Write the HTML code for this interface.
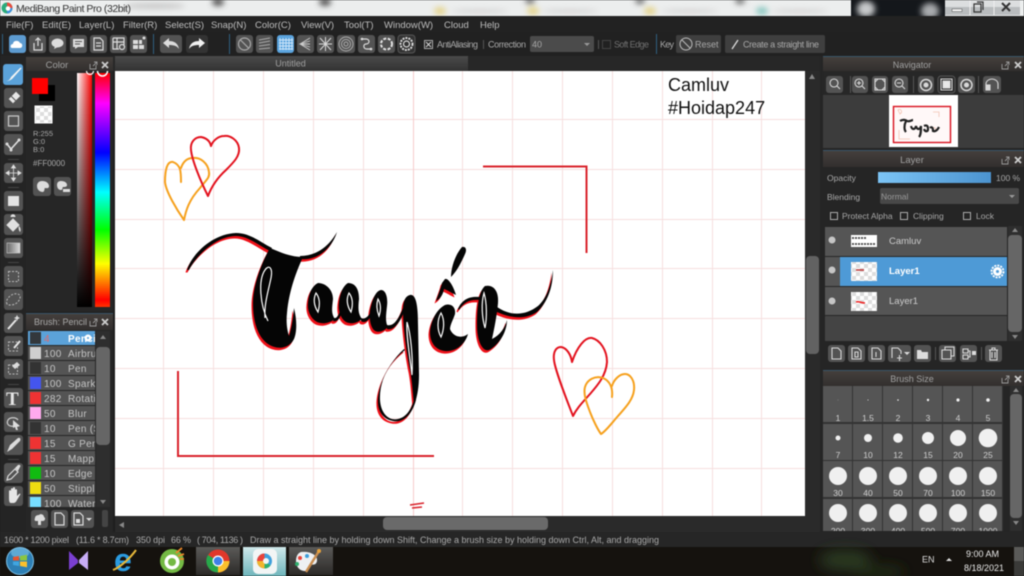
<!DOCTYPE html>
<html><head><meta charset="utf-8"><title>MediBang Paint Pro</title>
<style>
html,body{margin:0;padding:0;width:1024px;height:576px;overflow:hidden;background:#1f1f1f}
svg{display:block;filter:blur(.45px)}
text{font-family:"Liberation Sans",sans-serif;font-size:9.5px;fill:#a8a8a8}
.m text{font-size:9.5px;fill:#bdbdbd}
.h{text-anchor:middle;fill:#a0a0a0;font-size:9px}
.b{fill:#535353}
.i{fill:none;stroke:#dcdcdc;stroke-width:1.2}
.f{fill:#dcdcdc}
.g{stroke:#f6dfdf;stroke-width:1;fill:none}
.r text{font-size:10px;fill:#c4c4c4;letter-spacing:.3px}
.z text{font-size:8.5px;fill:#d0d0d0;text-anchor:middle}
</style></head><body>
<svg width="1024" height="576" viewBox="0 0 1024 576" xmlns="http://www.w3.org/2000/svg">
<defs>
<filter id="bl" x="-50%" y="-50%" width="200%" height="200%"><feGaussianBlur stdDeviation="3"/></filter>
<filter id="bl2" x="-50%" y="-50%" width="200%" height="200%"><feGaussianBlur stdDeviation="7"/></filter>
<linearGradient id="hue" x1="0" y1="0" x2="0" y2="1"><stop offset="0" stop-color="#f00"/><stop offset=".13" stop-color="#f0f"/><stop offset=".34" stop-color="#00f"/><stop offset=".51" stop-color="#0ff"/><stop offset=".67" stop-color="#0f0"/><stop offset=".815" stop-color="#ff0"/><stop offset=".97" stop-color="#f00"/><stop offset="1" stop-color="#f30"/></linearGradient>
<linearGradient id="wr" x1="0" y1="0" x2="1" y2="0"><stop offset="0" stop-color="#fff"/><stop offset="1" stop-color="#f00"/></linearGradient>
<linearGradient id="tb" x1="0" y1="0" x2="0" y2="1"><stop offset="0" stop-color="#000" stop-opacity="0"/><stop offset="1" stop-color="#000"/></linearGradient>
<linearGradient id="op" x1="0" y1="0" x2="1" y2="0"><stop offset="0" stop-color="#7cc4f5"/><stop offset="1" stop-color="#4b93cf"/></linearGradient>
<linearGradient id="hd" x1="0" y1="0" x2="0" y2="1"><stop offset="0" stop-color="#443f3c"/><stop offset="1" stop-color="#322f2e"/></linearGradient>
<linearGradient id="tab" x1="0" y1="0" x2="0" y2="1"><stop offset="0" stop-color="#4a4a4a"/><stop offset="1" stop-color="#333"/></linearGradient>
<linearGradient id="bt" x1="0" y1="0" x2="0" y2="1"><stop offset="0" stop-color="#5b5a58"/><stop offset="1" stop-color="#2c2a28"/></linearGradient>
<linearGradient id="bta" x1="0" y1="0" x2="0" y2="1"><stop offset="0" stop-color="#cfe8ea"/><stop offset="1" stop-color="#6fb5bb"/></linearGradient>
<linearGradient id="gr" x1="0" y1="0" x2="1" y2="0"><stop offset="0" stop-color="#666"/><stop offset="1" stop-color="#ddd"/></linearGradient>
<pattern id="ck" width="8" height="8" patternUnits="userSpaceOnUse"><rect width="8" height="8" fill="#fff"/><rect width="4" height="4" fill="#ddd"/><rect x="4" y="4" width="4" height="4" fill="#ddd"/></pattern>
<clipPath id="cb"><rect x="28" y="331" width="67" height="176"/></clipPath>
<clipPath id="cz"><rect x="823" y="386" width="180" height="145"/></clipPath>
<clipPath id="cc"><rect x="77" y="71" width="36" height="240"/></clipPath>
</defs>

<!-- title bar -->
<rect width="1024" height="16" fill="#eceeee"/>
<g filter="url(#bl)">
<ellipse cx="155" cy="6" rx="30" ry="3" fill="#c9c9c9"/>
<ellipse cx="218" cy="2" rx="6" ry="4" fill="#555"/>
<ellipse cx="325" cy="2" rx="6" ry="4" fill="#555"/>
<ellipse cx="440" cy="11" rx="6" ry="4" fill="#e5d58e"/><ellipse cx="480" cy="11" rx="28" ry="2" fill="#d5d5d5"/>
<ellipse cx="533" cy="11" rx="6" ry="4" fill="#e5d58e"/><ellipse cx="570" cy="11" rx="28" ry="2" fill="#d5d5d5"/>
<ellipse cx="650" cy="11" rx="6" ry="4" fill="#e5d58e"/><ellipse cx="690" cy="11" rx="28" ry="2" fill="#d5d5d5"/>
<ellipse cx="762" cy="11" rx="6" ry="4" fill="#8cc9c2"/><ellipse cx="800" cy="11" rx="28" ry="2" fill="#d5d5d5"/>
<ellipse cx="740" cy="1" rx="5" ry="3" fill="#666"/><ellipse cx="640" cy="1" rx="5" ry="3" fill="#666"/><ellipse cx="530" cy="1" rx="5" ry="3" fill="#666"/>
</g>
<path d="M851,0H945V16H851Z" fill="#14171b"/>
<ellipse cx="866" cy="9" rx="9" ry="8" fill="#c7c9cb" filter="url(#bl)"/>
<ellipse cx="930" cy="11" rx="9" ry="8" fill="#a9abae" filter="url(#bl)"/>
<rect x="945" y="0" width="75" height="15" fill="#b9bcbe"/><rect x="945" y="0" width="75" height="7" fill="#dcdedf"/>
<path d="M970,0V15M994,0V15" stroke="#eee"/>
<rect x="952" y="9" width="10" height="2.5" fill="#fff" stroke="#444" stroke-width=".5"/>
<path d="M974,4h7v8h-7zM977,2h6v8" fill="none" stroke="#333" stroke-width="1.2"/>
<path d="M1002,3l8,8M1010,3l-8,8" stroke="#333" stroke-width="2"/>
<circle cx="7" cy="8" r="5.5" fill="#2bab7c"/><path d="M7,2.5a5.5,5.5,0,0,1,5.5,5.5H7Z" fill="#e84a3c"/><path d="M7,8h5.5A5.5,5.5,0,0,1,7,13.500Z" fill="#3f8fdb"/><circle cx="8" cy="8.500" r="2.300" fill="#fff"/>
<text x="16" y="12" style="font-size:10.500px;fill:#333" textLength="115">MediBang Paint Pro (32bit)</text>

<!-- menu -->
<rect y="16" width="1024" height="16" fill="#222"/>
<g class="m">
<text x="6" y="28">File(F)</text><text x="42" y="28">Edit(E)</text><text x="79" y="28">Layer(L)</text><text x="123" y="28">Filter(R)</text><text x="165" y="28">Select(S)</text><text x="211" y="28">Snap(N)</text><text x="255" y="28">Color(C)</text><text x="301" y="28">View(V)</text><text x="344" y="28">Tool(T)</text><text x="384" y="28">Window(W)</text><text x="444" y="28">Cloud</text><text x="480" y="28">Help</text>
</g>

<!-- toolbar -->
<rect y="32" width="1024" height="24" fill="#212121"/>
<path d="M2.500,34V54M153.500,34V54M229.500,34V54M656.500,34V54" stroke="#2f5f80" stroke-width="1"/>
<rect x="9" y="35" width="17" height="18" rx="3" fill="#5d9bd0"/>
<path d="M12,48c-2,0-2-4,1-4c0-4,6-4,7-1c3,0,3,5,0,5Z" fill="#fff"/>
<g class="b"><rect x="29" y="35" width="17" height="18" rx="3"/><rect x="49" y="35" width="17" height="18" rx="3"/><rect x="70" y="35" width="17" height="18" rx="3"/><rect x="90" y="35" width="17" height="18" rx="3"/><rect x="110" y="35" width="17" height="18" rx="3"/><rect x="130" y="35" width="17" height="18" rx="3"/><rect x="160" y="35" width="22" height="18" rx="3"/><rect x="186" y="35" width="22" height="18" rx="3" style="fill:#333"/></g>
<path d="M34,43v7h8v-7M38,46V38M35.500,40.500L38,38l2.500,2.500" class="i"/>
<ellipse cx="57.500" cy="43" rx="6" ry="4.500" class="f"/><path d="M55,46l-1,3l4-2Z" class="f"/>
<path d="M73,39h11v8h-6l-3,2v-2h-2Z" class="f"/><path d="M75,41.500h7M75,44h5" stroke="#555"/>
<path d="M94,38h6l3,3v9h-9Z M96,43h5M96,46h5" class="i"/>
<path d="M113,38h11v7M113,38v11h6M113,42h11M117,38v11" class="i"/><circle cx="122" cy="47" r="2.500" class="i"/>
<path d="M133,40h5v4h-5zM139,40h3v4h-3zM133,45h5v4h-5zM139,45h5v4h-5z" class="f"/><circle cx="144" cy="38" r="1.500" class="f"/>
<path d="M163,43l6-5v3c5,0,9,2,10,8c-2-3-5-4-10-4v3Z" class="f"/>
<path d="M205,43l-6-5v3c-5,0-9,2-10,8c2-3,5-4,10-4v3Z" fill="#f0f0f0"/>
<g class="b"><rect x="236" y="35" width="17" height="18" rx="3"/><rect x="256" y="35" width="17" height="18" rx="3"/><rect x="297" y="35" width="17" height="18" rx="3"/><rect x="317" y="35" width="17" height="18" rx="3"/><rect x="337" y="35" width="18" height="18" rx="3"/><rect x="358" y="35" width="17" height="18" rx="3"/><rect x="378" y="35" width="17" height="18" rx="3"/><rect x="398" y="35" width="17" height="18" rx="3" style="fill:#333" stroke="#555"/></g>
<rect x="277" y="35" width="17" height="18" rx="3" fill="#5ba4de"/>
<circle cx="244.500" cy="44" r="6" fill="none" stroke="#aaa" stroke-width="1.200"/><path d="M240.500,40l8,8" stroke="#aaa" stroke-width="1.200"/>
<path d="M259,40l11-2M259,43l11-2M259,46l11-1.500M259,49l11-1" stroke="#aaa" stroke-width="1"/>
<path d="M280,38v12M283,38v12M286,38v12M289,38v12M292,38v12M279,40h14M279,43h14M279,46h14M279,49h14" stroke="#cfe6fa" stroke-width=".9"/>
<path d="M310,38l-10,6l10,6M310,44h-10M310,41l-10,3l10,3" stroke="#ccc" stroke-width=".9" fill="none"/>
<path d="M320,38l11,12M331,38l-11,12M325.500,37v14M319,44h13" stroke="#d8d8d8" stroke-width="1"/>
<circle cx="346" cy="44" r="7" fill="none" stroke="#aaa"/><circle cx="346" cy="44" r="4.500" fill="none" stroke="#aaa"/><circle cx="346" cy="44" r="2" fill="none" stroke="#aaa"/>
<path d="M362,39h4c4,0,4,5,0,5c-3,0-3,5,1,5h4" class="i"/><circle cx="362" cy="39" r="1.300" class="f"/><circle cx="371" cy="49" r="1.300" class="f"/>
<circle cx="386.500" cy="44" r="5.500" fill="none" stroke="#e2e2e2" stroke-width="2" stroke-dasharray="3 1.500"/>
<circle cx="406.500" cy="44" r="3" class="i"/><circle cx="406.500" cy="44" r="6" fill="none" stroke="#d8d8d8" stroke-width="2" stroke-dasharray="2 1"/>

<rect x="424.500" y="40.500" width="8" height="8" fill="none" stroke="#aaa"/><path d="M426,42l5,5M431,42l-5,5" stroke="#ccc" stroke-width="1.200"/>
<text x="437" y="47.500" style="font-size:9px" textLength="41">AntiAliasing</text>
<path d="M483.500,40V49M598.500,40V49" stroke="#555"/>
<text x="488" y="47.500" style="font-size:9px" textLength="38">Correction</text>
<rect x="530" y="36" width="64" height="16" rx="2" fill="#4b4b4b"/><text x="532" y="47.500" style="font-size:9px">40</text><path d="M584,43h6l-3,3Z" fill="#999"/>
<rect x="602.500" y="40.500" width="8" height="8" fill="none" stroke="#444"/>
<text x="614" y="47.500" style="font-size:9px;fill:#707070" textLength="35">Soft Edge</text>
<text x="660" y="47.500" style="font-size:9px" textLength="14">Key</text>
<rect x="676" y="35" width="45" height="18" rx="2" fill="#3f3f3f"/><circle cx="686" cy="44" r="6" fill="none" stroke="#bbb"/><path d="M682,40l8,8" stroke="#bbb"/><text x="695" y="47.500" style="font-size:9px">Reset</text>
<rect x="725" y="35" width="100" height="18" rx="2" fill="#3f3f3f"/><path d="M732,49l6-9" stroke="#ddd" stroke-width="1.300"/><text x="743" y="47.500" style="font-size:9px" textLength="76">Create a straight line</text>

<!-- canvas -->
<rect x="113" y="56" width="710" height="15" fill="#272727"/>
<rect x="115" y="56" width="353" height="15" fill="url(#tab)"/>
<text x="290.500" y="66.500" class="h">Untitled</text>
<rect x="115" y="71" width="690" height="445" fill="#fff"/>
<g class="g">
<path d="M163.500,71V516M213.500,71V516M263.500,71V516M313.500,71V516M363.500,71V516M462.500,71V516M512.500,71V516M562.500,71V516M612.500,71V516M662.500,71V516M712.500,71V516M761.500,71V516"/>
<path d="M115,119.500H805M115,169.500H805M115,219.500H805M115,268.500H805M115,318.500H805M115,368.500H805M115,418.500H805M115,468.500H805"/>
</g>
<path d="M413.500,71V516" stroke="#f6cccc"/>

<!-- frames -->
<g fill="none" stroke="#d9232b" stroke-width="2">
<path d="M483,166.500H586.500V253"/>
<path d="M178,371V456H434"/>
<path d="M410,505l14-2M412,508l10-1" stroke-width="1.500"/>
</g>
<!-- hearts -->
<g fill="none" stroke-linecap="round" stroke-linejoin="round" stroke-width="2">
<path stroke="#f6a11e" d="M181,182C181,172 181,165 173,162C167,161 165,170 165,182C166,192 177,210 184,220C186,210 189,200 200,188C206,180 210,178 209,172C208,163 200,157 193,158C187,158 183,162 181,168"/>
<path stroke="#e3131f" d="M211,146C210,141 206,138 201,137C195,137 190,142 191,150C192,160 200,180 208,196C211,188 216,179 226,170C234,162 240,156 239,148C238,140 230,135 224,136C219,136 213,140 211,146"/>
<path stroke="#e3131f" d="M572,362C571,355 567,348 561,347C556,347 553,352 554,360C555,370 566,398 573,416C577,408 582,403 590,394C597,386 606,376 607,362C607,350 600,340 592,338C585,337 577,347 572,362"/>
<path stroke="#f6a11e" d="M612,397C613,388 610,381 603,378C595,375 587,380 585,387C583,394 587,404 590,412C593,420 598,430 601,434C606,431 611,424 618,416C625,408 633,400 634,390C635,380 630,374 625,374C620,374 614,379 612,386"/>
</g>

<!-- lettering, red layer -->
<g transform="translate(-1.500,2.500)" fill="#ee1119" stroke="none">
<path d="M187,270C192,254 212,234 236,233C250,233 260,242 272,248L270,251C258,245 248,236 236,236C216,236 196,256 189,270Z"/>
<path d="M270,248C280,252 290,257 303,257C297,270 289,290 287,313C286,322 287,330 289,336C291,330 293,320 294,308C297,320 297,332 294,339C289,349 277,350 268,344C258,337 253,322 253,303C253,285 262,262 270,248Z"/>
<path d="M300,256C315,256 328,248 337,232C332,248 318,261 300,259Z"/>
<path d="M318,283C326,283 333,290 333,299C332,308 331,314 335,319C328,324 322,324 317,322C310,318 307,310 308,302C309,293 312,286 318,283Z"/>
<path d="M348,283C356,283 359,290 359,299C358,308 358,314 362,319C356,324 350,324 346,322C340,318 338,310 339,302C340,293 343,286 348,283Z"/>
<path d="M381,290C386,290 388,298 387,306C386,315 385,322 388,327C382,333 376,333 373,329C369,323 369,313 371,306C373,298 376,291 381,290Z"/>
<path d="M334,318C338,319 340,312 342,303L343,305C342,314 339,323 333,321ZM361,318C365,320 369,316 372,310L372,313C370,320 365,324 361,321ZM387,325C394,327 399,318 403,308L404,312C400,322 394,331 387,329Z"/>
<path d="M410,295C416,294 418,305 418,325L419,375C419,388 417,398 414,405C413,395 412,380 410,370C406,350 403,325 403,310C403,300 406,296 410,295Z"/>
<path d="M405,350C390,362 379,380 380,400C381,415 390,421 398,419C408,417 415,405 417,385L416,400C412,415 403,423 393,421C382,419 377,410 378,398C380,378 392,360 404,349Z"/>
<path d="M445,305C452,303 456,308 455,314C453,320 450,325 450,329C452,335 460,340 468,334C465,345 455,352 445,351C435,350 430,342 430,332C431,320 437,309 445,305Z"/>
<path d="M445,279C449,278 454,288 456,295C450,292 447,290 444,289C443,295 440,299 436,301C438,295 441,288 442,283Z"/>
<path d="M485,286C494,284 499,292 498,303C497,315 494,330 492,339C500,335 505,328 507,320C507,332 499,345 489,350C482,352 477,340 477,325C477,310 478,292 485,286Z"/>
<path d="M458,309C462,299 470,296 480,297L480,300C470,299 464,302 459,310Z"/>
<path d="M497,307C510,316 525,316 538,306C547,298 551,285 553,270C553,288 547,303 537,312C525,320 510,318 497,312Z"/>
</g>
<!-- lettering, black layer -->
<g fill="#050505" stroke="none">
<path d="M187,270C192,254 212,234 236,233C250,233 260,242 272,248L270,251C258,245 248,236 236,236C216,236 196,256 189,270Z"/>
<path d="M270,248C280,252 290,257 303,257C297,270 289,290 287,313C286,322 287,330 289,336C291,330 293,320 294,308C297,320 297,332 294,339C289,349 277,350 268,344C258,337 253,322 253,303C253,285 262,262 270,248Z"/>
<path d="M300,256C315,256 328,248 337,232C332,248 318,261 300,259Z"/>
<path d="M318,283C326,283 333,290 333,299C332,308 331,314 335,319C328,324 322,324 317,322C310,318 307,310 308,302C309,293 312,286 318,283Z"/>
<path d="M348,283C356,283 359,290 359,299C358,308 358,314 362,319C356,324 350,324 346,322C340,318 338,310 339,302C340,293 343,286 348,283Z"/>
<path d="M381,290C386,290 388,298 387,306C386,315 385,322 388,327C382,333 376,333 373,329C369,323 369,313 371,306C373,298 376,291 381,290Z"/>
<path d="M334,318C338,319 340,312 342,303L343,305C342,314 339,323 333,321ZM361,318C365,320 369,316 372,310L372,313C370,320 365,324 361,321ZM387,325C394,327 399,318 403,308L404,312C400,322 394,331 387,329Z"/>
<path d="M410,295C416,294 418,305 418,325L419,375C419,388 417,398 414,405C413,395 412,380 410,370C406,350 403,325 403,310C403,300 406,296 410,295Z"/>
<path d="M405,350C390,362 379,380 380,400C381,415 390,421 398,419C408,417 415,405 417,385L416,400C412,415 403,423 393,421C382,419 377,410 378,398C380,378 392,360 404,349Z"/>
<path d="M445,305C452,303 456,308 455,314C453,320 450,325 450,329C452,335 460,340 468,334C465,345 455,352 445,351C435,350 430,342 430,332C431,320 437,309 445,305Z"/>
<path d="M445,279C449,278 454,288 456,295C450,292 447,290 444,289C443,295 440,299 436,301C438,295 441,288 442,283Z"/>
<path d="M462,247C466,246 467,250 465,254C461,263 457,271 451,277C451,268 455,255 462,247Z"/>
<path d="M485,286C494,284 499,292 498,303C497,315 494,330 492,339C500,335 505,328 507,320C507,332 499,345 489,350C482,352 477,340 477,325C477,310 478,292 485,286Z"/>
<path d="M458,309C462,299 470,296 480,297L480,300C470,299 464,302 459,310Z"/>
<path d="M497,307C510,316 525,316 538,306C547,298 551,285 553,270C553,288 547,303 537,312C525,320 510,318 497,312Z"/>
</g>
<!-- highlights -->
<g fill="none" stroke="#fff" stroke-width="1.200">
<path d="M268,321C260,305 258,280 265,270C269,264 273,268 271,278C268,292 264,305 265,318"/>
<path d="M316,293C313,299 314,306 318,312C320,305 320,298 316,293Z"/>
<path d="M349,293C346,299 347,306 351,312C353,305 353,298 349,293Z"/>
<path d="M378,299C376,305 377,311 379,316C381,310 381,304 378,299Z"/>
<path d="M407,322C406,335 410,358 412,375C413,358 411,335 407,322Z"/>
<path d="M441,313C437,320 437,330 441,337C444,330 445,320 441,313Z"/>
<path d="M484,293C481,303 482,318 485,328C487,318 487,303 484,293Z"/>
</g>
<text x="668" y="91" style="font-size:18px;fill:#111">Camluv</text>
<text x="668" y="114" style="font-size:18px;fill:#111">#Hoidap247</text>

<!-- canvas scrollbars -->
<rect x="805" y="71" width="18" height="461" fill="#2a2a2a"/>
<path d="M809,79l3-5l3,5Z" fill="#888"/>
<rect x="806" y="256" width="13" height="98" rx="4" fill="#626262"/>
<rect x="115" y="516" width="708" height="16" fill="#2a2a2a"/>
<path d="M124,522l-5,3l5,3Z" fill="#888"/>
<rect x="383" y="517" width="165" height="13" rx="4" fill="#6a6a6a"/>

<!-- left tool column -->
<rect x="0" y="56" width="26" height="476" fill="#242424"/>
<rect x="3" y="64" width="20" height="21" rx="3" fill="#5ba2d9"/>
<path d="M6,81c3,0,4-2,5-4l9-9c1-1,2,0,1,1l-8,9c-2,2-4,3-7,3Z" fill="#f4f4f4"/>
<g class="b">
<rect x="4" y="88" width="19" height="20" rx="3"/><rect x="4" y="111" width="19" height="20" rx="3"/><rect x="4" y="134" width="19" height="21" rx="3"/><rect x="4" y="163" width="19" height="20" rx="3"/><rect x="4" y="191" width="19" height="20" rx="3"/><rect x="4" y="214" width="19" height="21" rx="3"/><rect x="4" y="238" width="19" height="20" rx="3"/><rect x="4" y="266" width="19" height="21" rx="3"/><rect x="4" y="289" width="19" height="21" rx="3"/><rect x="4" y="313" width="19" height="20" rx="3"/><rect x="4" y="336" width="19" height="20" rx="3"/><rect x="4" y="359" width="19" height="20" rx="3"/><rect x="4" y="388" width="19" height="20" rx="3"/><rect x="4" y="412" width="19" height="20" rx="3"/><rect x="4" y="435" width="19" height="20" rx="3"/><rect x="4" y="463" width="19" height="20" rx="3"/><rect x="4" y="486" width="19" height="20" rx="3"/>
</g>
<path d="M8,99l8-8l5,5l-8,8ZM11,96l5,5" fill="#e6e6e6" stroke="#555"/>
<rect x="8.500" y="116" width="10" height="10" fill="none" stroke="#ccc" stroke-width="1.200"/>
<path d="M7,144l4,5l9-10" fill="none" stroke="#e0e0e0" stroke-width="1.600"/><circle cx="7" cy="144" r="1.500" class="f"/><circle cx="11" cy="150" r="1.500" class="f"/><circle cx="19" cy="140" r="1.500" class="f"/>
<path d="M13.500,165v16M6,173h15M13.500,165l-2,3h4ZM13.500,181l-2-3h4ZM6,173l3-2v4ZM21,173l-3-2v4Z" stroke="#e0e0e0" stroke-width=".8" fill="#e0e0e0"/>
<rect x="8" y="196" width="11" height="10" fill="#e2e2e2"/>
<path d="M7,225l6-6l6,6l-6,6ZM11,217c0-3,4-3,4,0" fill="#e0e0e0" stroke="#e0e0e0"/><path d="M19,226c2,2,2,5,1,6c-1-1-2-4-1-6Z" class="f"/>
<rect x="7" y="243" width="13" height="10" fill="url(#gr)" stroke="#ccc" stroke-width=".6"/>
<rect x="8.500" y="271.500" width="10" height="10" fill="none" stroke="#bbb" stroke-dasharray="2 1.500"/>
<path d="M7,304c-2-4,3-9,7-10c4-1,7,1,6,4c-1,4-5,7-9,7c-2,0-3,0-4-1Z" fill="none" stroke="#bbb" stroke-dasharray="2 1.500"/>
<path d="M8,329l8-9" stroke="#e6e6e6" stroke-width="2"/><path d="M17,315l1,2l2,1l-2,1l-1,2l-1-2l-2-1l2-1Z" class="f"/>
<rect x="8.500" y="342" width="9" height="9" fill="none" stroke="#bbb" stroke-dasharray="2 1.500"/><path d="M14,348l6-7" stroke="#e6e6e6" stroke-width="2"/>
<rect x="8.500" y="365" width="9" height="9" fill="none" stroke="#bbb" stroke-dasharray="2 1.500"/><path d="M12,366l5-4l3,3l-5,4Z" class="f"/>
<text x="6" y="405" style="font-family:'Liberation Serif',serif;font-size:19px;font-weight:bold;fill:#e6e6e6">T</text>
<path d="M14,426c-5,1-8-2-6-6c2-3,8-3,10,0" fill="none" stroke="#ccc" stroke-width="1.200"/><path d="M13,420l7,6l-3,1l1,3l-2,0l-1-3l-2,1Z" class="f"/>
<path d="M7,452l3-7l8-7c2-1,3,1,2,3l-8,8Z" class="f"/>
<path d="M7,480l1-4l7-7l3,3l-7,7Z" fill="none" stroke="#ddd" stroke-width="1.200"/><path d="M15,468l3-3c2-1,3,1,2,2l-2,4Z" class="f"/>
<path d="M9,497v-6c0-1,2-1,2,0v-2c0-1,2-1,2,0v-1c0-1,2-1,2,0v2c0-1,2-1,2,0v6l2-2c1-1,2,0,1,1l-3,5c-1,2-2,3-4,3h-2c-2,0-2-3-2-6Z" fill="#e6e6e6"/>
<path d="M8,159.500h11M8,187.500h11M8,262.500h11M8,384.500h11M8,459.500h11" stroke="#444"/>

<!-- colour panel -->
<rect x="26" y="56" width="87" height="256" fill="#262626"/>
<rect x="26" y="57" width="87" height="14" fill="url(#hd)"/>
<text x="57" y="68" class="h" style="font-size:9.500px">Color</text>
<path d="M90,64v5h6v-4M93,66l4-4M94,62h3v3" fill="none" stroke="#999" stroke-width=".9"/>
<path d="M102,62l6,6M108,62l-6,6" stroke="#ccc" stroke-width="1.800"/>
<rect x="39" y="85" width="16" height="16" fill="#000"/>
<rect x="32" y="78" width="16" height="16" fill="#f00"/>
<rect x="35" y="106" width="17" height="17" fill="url(#ck)" stroke="#fff"/>
<g><text x="33" y="136" style="font-size:7.500px">R:255</text><text x="33" y="144" style="font-size:7.500px">G:0</text><text x="33" y="152" style="font-size:7.500px">B:0</text><text x="33" y="166" style="font-size:8px">#FF0000</text></g>
<rect x="33" y="177" width="18" height="19" rx="3" class="b"/><rect x="54" y="177" width="17" height="19" rx="3" class="b"/>
<path d="M42,181c5,0,7,3,7,5c0,3-3,2-4,2c-1,1,0,3-2,4c-4,0-6-3-6-6c0-3,2-5,5-5Z" class="f"/>
<path d="M61,181c4,0,6,2,6,4c0,2-2,2-4,2c-1,1,0,3-2,3c-3,0-4-3-4-5c0-3,2-4,4-4Z" class="f"/><rect x="63" y="189" width="7" height="3" class="f"/>
<rect x="77" y="73" width="15" height="234" fill="url(#wr)"/>
<rect x="77" y="73" width="15" height="234" fill="url(#tb)"/>
<rect x="95" y="73" width="15" height="234" fill="url(#hue)"/>
<g clip-path="url(#cc)"><rect x="77" y="71" width="36" height="2" fill="#262626"/><circle cx="90" cy="71" r="3.500" fill="none" stroke="#fff" stroke-width="1.200"/><circle cx="102.500" cy="71" r="5" fill="none" stroke="#fff" stroke-width="1.500"/></g>

<!-- brush panel -->
<rect x="26" y="313" width="87" height="219" fill="#262626"/>
<path d="M26,313.500H113" stroke="#3a5568"/>
<rect x="26" y="314" width="87" height="16" fill="url(#hd)"/>
<text x="34" y="325" style="font-size:9px">Brush: Pencil</text>
<path d="M90,321v5h6v-4M93,323l4-4M94,319h3v3" fill="none" stroke="#999" stroke-width=".9"/>
<path d="M102,319l6,6M108,319l-6,6" stroke="#ccc" stroke-width="1.800"/>
<g clip-path="url(#cb)">
<rect x="28" y="331" width="67" height="14" fill="#5ba2d9"/>
<rect x="28" y="346" width="67" height="14" fill="#545454"/><rect x="28" y="361" width="67" height="14" fill="#545454"/><rect x="28" y="376" width="67" height="14" fill="#545454"/><rect x="28" y="391" width="67" height="14" fill="#545454"/><rect x="28" y="406" width="67" height="14" fill="#545454"/><rect x="28" y="421" width="67" height="14" fill="#545454"/><rect x="28" y="436" width="67" height="14" fill="#545454"/><rect x="28" y="451" width="67" height="14" fill="#545454"/><rect x="28" y="466" width="67" height="14" fill="#545454"/><rect x="28" y="481" width="67" height="14" fill="#545454"/><rect x="28" y="496" width="67" height="14" fill="#545454"/>
<rect x="30" y="332" width="11" height="12" fill="#33383c"/><rect x="30" y="347" width="11" height="12" fill="#cfcfcf"/><rect x="30" y="362" width="11" height="12" fill="#333"/><rect x="30" y="377" width="11" height="12" fill="#4455ee"/><rect x="30" y="392" width="11" height="12" fill="#ee3333"/><rect x="30" y="407" width="11" height="12" fill="#ffaaee"/><rect x="30" y="422" width="11" height="12" fill="#333"/><rect x="30" y="437" width="11" height="12" fill="#ee3333"/><rect x="30" y="452" width="11" height="12" fill="#ee3333"/><rect x="30" y="467" width="11" height="12" fill="#11bb11"/><rect x="30" y="482" width="11" height="12" fill="#eedd11"/><rect x="30" y="497" width="11" height="12" fill="#77ddff"/>
<g class="r">
<text x="44" y="342" style="fill:#e06a6a">4</text><text x="68" y="342" style="fill:#fff;font-weight:bold">Pencil</text>
<text x="44" y="357">100</text><text x="68" y="357">Airbrush</text>
<text x="44" y="372">10</text><text x="68" y="372">Pen</text>
<text x="44" y="387">100</text><text x="68" y="387">Sparkle</text>
<text x="44" y="402">282</text><text x="68" y="402">Rotation</text>
<text x="44" y="417">50</text><text x="68" y="417">Blur</text>
<text x="44" y="432">10</text><text x="68" y="432">Pen (S</text>
<text x="44" y="447">15</text><text x="68" y="447">G Pen</text>
<text x="44" y="462">15</text><text x="68" y="462">Mapping</text>
<text x="44" y="477">10</text><text x="68" y="477">Edge P</text>
<text x="44" y="492">50</text><text x="68" y="492">Stipple</text>
<text x="44" y="507">100</text><text x="68" y="507">Water</text>
</g>
<circle cx="88" cy="338" r="3.500" fill="#fff"/><circle cx="88" cy="338" r="1" fill="#5ba2d9"/>
</g>
<rect x="96" y="331" width="14" height="176" fill="#2e2e2e"/>
<rect x="96" y="347" width="14" height="98" rx="4" fill="#666"/>
<path d="M100,339l3-4l3,4Z" fill="#888"/><path d="M100,500l3,4l3-4Z" fill="#888"/>
<rect x="31" y="510" width="17" height="18" rx="3" class="b"/><rect x="51" y="510" width="17" height="18" rx="3" class="b"/><rect x="71" y="510" width="23" height="18" rx="3" class="b"/><rect x="102" y="510" width="6" height="17" rx="2" fill="#444"/>
<path d="M35,518c0-2,2-3,4-3c2-2,5,0,5,2c2,1,1,4-1,4h-2v4h-3v-4h-2c-1,0-2-1-1-3Z" class="f"/>
<path d="M55,513h6l3,3v9h-9Z" class="i"/>
<path d="M74,513h6l3,3v9h-9Z" class="i"/><rect x="76" y="519" width="4" height="4" class="f"/><path d="M86,518h6l-3,3Z" class="f"/>

<!-- right panels -->
<rect x="820" y="56" width="204" height="476" fill="#252525"/>
<path d="M823,56.500H1024M823,150.500H1024M823,370.500H1024" stroke="#3a5568"/>
<rect x="823" y="57" width="201" height="14" fill="url(#hd)"/>
<text x="912" y="68" class="h" style="font-size:9px">Navigator</text>
<path d="M1002,64v5h6v-4M1005,66l4-4M1006,62h3v3" fill="none" stroke="#999" stroke-width=".9"/>
<path d="M1015,62l6,6M1021,62l-6,6" stroke="#ccc" stroke-width="1.800"/>
<rect x="823" y="71" width="201" height="24" fill="#272727"/>
<g class="b"><rect x="826" y="76" width="17" height="17" rx="3"/><rect x="852" y="76" width="16" height="17" rx="3"/><rect x="872" y="76" width="16" height="17" rx="3"/><rect x="892" y="76" width="16" height="17" rx="3"/><rect x="918" y="76" width="16" height="17" rx="3"/><rect x="938" y="76" width="17" height="17" rx="3" style="fill:#2b2b2b" stroke="#555"/><rect x="958" y="76" width="17" height="17" rx="3"/><rect x="983" y="76" width="18" height="17" rx="3"/></g>
<g fill="none" stroke="#d8d8d8" stroke-width="1.100">
<circle cx="834" cy="83" r="4"/><path d="M837,86l3,3"/>
<circle cx="859" cy="83" r="4"/><path d="M862,86l3,3M857,83h4M859,81v4"/>
<path d="M875,79h10v11h-10zM875,82l3-3M885,82l-3-3M875,87l3,3M885,87l-3,3"/>
<circle cx="899" cy="83" r="4"/><path d="M902,86l3,3M897,83h4"/>
<circle cx="926" cy="85" r="5.500" stroke-width="1.500"/><circle cx="926" cy="85" r="2" fill="#d8d8d8"/>
<rect x="943" y="81" width="7" height="7" fill="#e8e8e8"/><path d="M941,79h11v11h-11z"/>
<circle cx="966.500" cy="85" r="5.500" stroke-width="1.500"/><circle cx="966.500" cy="85" r="2" fill="#d8d8d8"/>
<path d="M986,89v-5c0-3,3-5,6-5s6,2,6,5v5"/><rect x="986" y="85" width="4" height="5" fill="#d8d8d8"/>
</g>
<path d="M850.500,76V93M913.500,76V93M978.500,76V93" stroke="#555"/>
<rect x="823" y="95" width="201" height="53" fill="#3c3c3c"/>
<rect x="889" y="95" width="69" height="52" fill="#fff"/>
<rect x="893.500" y="106.500" width="57" height="36" fill="#fff8f8" stroke="#d8101c" stroke-width="1.400"/>
<path d="M898,110c3-2,5,2,2,4ZM933,112h6v5M899,130v9h11M932,128c2-1,5,0,3,3" fill="none" stroke="#f3c4b4" stroke-width=".8"/>
<path d="M900,121c3-2,6-1,7,0c3,1,5-1,6-1M906,121c-2,4-2,9,0,11M911,126c1,4,4,4,5,0c1,4,4,4,5,0c0,4,0,9-2,11M924,126c2-1,4-1,4,3c0,3-3,3-4,0M930,128c2-2,3,0,3,3c3,1,5-2,6-4" fill="none" stroke="#222" stroke-width="2.200"/>

<rect x="823" y="151" width="201" height="16" fill="url(#hd)"/>
<text x="912" y="163" class="h" style="font-size:9.500px">Layer</text>
<path d="M1002,159v5h6v-4M1005,161l4-4M1006,157h3v3" fill="none" stroke="#999" stroke-width=".9"/>
<path d="M1015,157l6,6M1021,157l-6,6" stroke="#ccc" stroke-width="1.800"/>
<text x="827" y="181" style="font-size:8.500px">Opacity</text>
<rect x="878" y="172" width="113" height="11" fill="url(#op)"/>
<text x="996" y="181" style="font-size:8.500px">100 %</text>
<text x="827" y="200" style="font-size:8.500px">Blending</text>
<rect x="880" y="188" width="139" height="16" rx="2" fill="#484848"/><text x="881" y="199.500" style="font-size:8.500px;fill:#999">Normal</text><path d="M1009,195h6l-3,3Z" fill="#999"/>
<g fill="none" stroke="#aaa"><rect x="830.500" y="212.500" width="7" height="7"/><rect x="900.500" y="212.500" width="7" height="7"/><rect x="963.500" y="212.500" width="7" height="7"/></g>
<text x="842" y="219" style="font-size:8.500px">Protect Alpha</text><text x="913" y="219" style="font-size:8.500px">Clipping</text><text x="976" y="219" style="font-size:8.500px">Lock</text>

<rect x="825" y="227" width="182" height="114" fill="#444"/>
<rect x="825" y="227" width="182" height="29" fill="#555"/>
<rect x="825" y="257" width="15" height="29" fill="#555"/><rect x="840" y="257" width="167" height="29" fill="#4e9ad6"/>
<rect x="825" y="287" width="182" height="28" fill="#555"/>
<path d="M825,256.500H1007M825,286.500H1007M825,315.500H1007" stroke="#262626"/>
<circle cx="832" cy="240" r="3.500" fill="#c6c6c6"/><circle cx="832" cy="270" r="3.500" fill="#c6c6c6"/><circle cx="832" cy="301" r="3.500" fill="#c6c6c6"/>
<rect x="851" y="235" width="26" height="12" fill="#fff"/><path d="M852,238h14M852,244h23" stroke="#444" stroke-width="1.800" stroke-dasharray="2 1"/>
<rect x="851" y="262" width="26" height="19" fill="url(#ck)"/><path d="M856,270h8" stroke="#b33" stroke-width="1.500"/><rect x="851" y="292" width="26" height="19" fill="url(#ck)"/><path d="M856,302c3-1,5,1,9,1" stroke="#e22" stroke-width="1.500" fill="none"/>
<text x="889" y="244" style="font-size:9.500px;fill:#ccc">Camluv</text>
<text x="889" y="274" style="font-size:9.500px;fill:#fff;font-weight:bold">Layer1</text>
<text x="889" y="304" style="font-size:9.500px;fill:#ccc">Layer1</text>
<circle cx="997.500" cy="271.500" r="4.500" fill="#fff"/><circle cx="997.500" cy="271.500" r="6" fill="none" stroke="#fff" stroke-width="1.800" stroke-dasharray="2 1.100"/><circle cx="997.500" cy="271.500" r="1.500" fill="#4e9ad6"/>
<rect x="1008" y="226" width="14" height="115" fill="#2e2e2e"/>
<rect x="1008" y="235" width="14" height="97" rx="4" fill="#666"/>
<path d="M1012,232l3-4l3,4Z" fill="#888"/><path d="M1012,335l3,4l3-4Z" fill="#888"/>
<g class="b"><rect x="828" y="345" width="17" height="17" rx="3"/><rect x="848" y="345" width="17" height="17" rx="3"/><rect x="868" y="345" width="17" height="17" rx="3"/><rect x="888" y="345" width="23" height="17" rx="3"/><rect x="914" y="345" width="17" height="17" rx="3"/><rect x="939" y="345" width="17" height="17" rx="3"/><rect x="960" y="345" width="17" height="17" rx="3"/><rect x="985" y="345" width="17" height="17" rx="3"/></g>
<g fill="none" stroke="#d8d8d8" stroke-width="1.100">
<path d="M832,348h6l3,3v8h-9Z"/><path d="M852,348h6l3,3v8h-9ZM855,352h3v5h-3z"/><path d="M872,348h6l3,3v8h-9ZM876,352v5"/><path d="M892,358v-10h6l3,3v3M897,358h5M899.500,355v6"/>
<path d="M942,350h9v9h-9zM945,350v-3h9v9h-3"/><path d="M963,349h5v4h-5zM963,355h5v4h-5zM968,351h2v6h-2"/><path d="M989,350h9M992,350v-2h3v2M990,350v10h7v-10M992,352v6M995,352v6"/>
</g>
<path d="M904,352h6l-3,3Z" class="f"/><rect x="972" y="351" width="4" height="4" class="f"/>
<path d="M917,350h4l1,2h6v7h-11Z" class="f"/>
<path d="M935.500,347V360M981.500,347V360" stroke="#555"/>

<rect x="823" y="371" width="201" height="15" fill="url(#hd)"/>
<text x="912" y="382" class="h" style="font-size:9px">Brush Size</text>
<path d="M1002,378v5h6v-4M1005,380l4-4M1006,376h3v3" fill="none" stroke="#999" stroke-width=".9"/>
<path d="M1015,376l6,6M1021,376l-6,6" stroke="#ccc" stroke-width="1.800"/>
<rect x="823" y="386" width="180" height="145" fill="#333"/>
<rect x="1010" y="386" width="12" height="145" fill="#2e2e2e"/><rect x="1010" y="394" width="12" height="124" rx="4" fill="#666"/>
<path d="M1013,392l3-4l3,4Z" fill="#888"/><path d="M1013,521l3,4l3-4Z" fill="#888"/>
<g clip-path="url(#cz)">
<g fill="#555">
<rect x="823" y="386" width="29" height="36"/><rect x="853" y="386" width="29" height="36"/><rect x="883" y="386" width="29" height="36"/><rect x="913" y="386" width="29" height="36"/><rect x="943" y="386" width="29" height="36"/><rect x="973" y="386" width="29" height="36"/>
<rect x="823" y="424" width="29" height="36"/><rect x="853" y="424" width="29" height="36"/><rect x="883" y="424" width="29" height="36"/><rect x="913" y="424" width="29" height="36"/><rect x="943" y="424" width="29" height="36"/><rect x="973" y="424" width="29" height="36"/>
<rect x="823" y="461" width="29" height="36"/><rect x="853" y="461" width="29" height="36"/><rect x="883" y="461" width="29" height="36"/><rect x="913" y="461" width="29" height="36"/><rect x="943" y="461" width="29" height="36"/><rect x="973" y="461" width="29" height="36"/>
<rect x="823" y="499" width="29" height="36"/><rect x="853" y="499" width="29" height="36"/><rect x="883" y="499" width="29" height="36"/><rect x="913" y="499" width="29" height="36"/><rect x="943" y="499" width="29" height="36"/><rect x="973" y="499" width="29" height="36"/>
</g>
<g fill="#f0f0f0">
<circle cx="838" cy="400" r=".3"/><circle cx="868" cy="400" r=".5"/><circle cx="898" cy="400" r=".8"/><circle cx="928" cy="400" r="1.200"/><circle cx="958" cy="400" r="1.600"/><circle cx="988" cy="400" r="1.800"/>
<circle cx="838" cy="438" r="2.500"/><circle cx="868" cy="438" r="4"/><circle cx="898" cy="438" r="4.800"/><circle cx="928" cy="438" r="6"/><circle cx="958" cy="438" r="8"/><circle cx="988" cy="438" r="9.300"/>
<circle cx="838" cy="476" r="9"/><circle cx="868" cy="476" r="9"/><circle cx="898" cy="476" r="9"/><circle cx="928" cy="476" r="9"/><circle cx="958" cy="476" r="9"/><circle cx="988" cy="476" r="9"/>
<circle cx="838" cy="513" r="9"/><circle cx="868" cy="513" r="9"/><circle cx="898" cy="513" r="9"/><circle cx="928" cy="513" r="9"/><circle cx="958" cy="513" r="9"/><circle cx="988" cy="513" r="9"/>
</g>
<g class="z">
<text x="838" y="421">1</text><text x="868" y="421">1.5</text><text x="898" y="421">2</text><text x="928" y="421">3</text><text x="958" y="421">4</text><text x="988" y="421">5</text>
<text x="838" y="458">7</text><text x="868" y="458">10</text><text x="898" y="458">12</text><text x="928" y="458">15</text><text x="958" y="458">20</text><text x="988" y="458">25</text>
<text x="838" y="496">30</text><text x="868" y="496">40</text><text x="898" y="496">50</text><text x="928" y="496">70</text><text x="958" y="496">100</text><text x="988" y="496">150</text>
<text x="838" y="534">200</text><text x="868" y="534">300</text><text x="898" y="534">400</text><text x="928" y="534">500</text><text x="958" y="534">700</text><text x="988" y="534">1000</text>
</g>
</g>

<!-- status bar -->
<rect y="532" width="1024" height="15" fill="#262626"/>
<g>
<text x="4" y="543" style="font-size:9px" textLength="65">1600 * 1200 pixel</text>
<text x="76" y="543" style="font-size:9px" textLength="53">(11.6 * 8.7cm)</text>
<text x="136" y="543" style="font-size:9px" textLength="29">350 dpi</text>
<text x="171" y="543" style="font-size:9px" textLength="20">66 %</text>
<text x="197" y="543" style="font-size:9px" textLength="46">( 704, 1136 )</text>
<text x="250" y="543" style="font-size:9px" textLength="409">Draw a straight line by holding down Shift, Change a brush size by holding down Ctrl, Alt, and dragging</text>
</g>

<!-- taskbar -->
<rect y="547" width="1024" height="29" fill="#15120e"/>
<g filter="url(#bl2)">
<ellipse cx="845" cy="560" rx="26" ry="10" fill="#2a3a24"/>
<ellipse cx="880" cy="572" rx="26" ry="5" fill="#243018"/>
</g>
<rect x="196" y="547" width="44" height="28" fill="url(#bt)"/>
<rect x="243" y="547" width="43" height="29" fill="url(#bta)"/>
<rect x="289" y="547" width="44" height="28" fill="url(#bt)"/>
<circle cx="20" cy="561" r="13.500" fill="#2e7fb4"/><circle cx="20" cy="561" r="13.500" fill="none" stroke="#7ec0e6" stroke-width="1"/>
<ellipse cx="20" cy="553" rx="9" ry="5" fill="#7fc4ea" opacity=".6"/>
<path d="M13,557l6-1v4.500h-6Z" fill="#e8552f"/><path d="M20,556l7-1.200v5.700h-7Z" fill="#8cc63f"/><path d="M13,561.500h6v4.500l-6-1Z" fill="#41a5e0"/><path d="M20,561.500h7v5.700l-7-1.200Z" fill="#fbc02d"/>
<path d="M69,551l9,9v3l-9,7Z" fill="#7a3fd0"/><path d="M88,551l-9,9v3l9,7Z" fill="#c8adf6"/>
<text x="114" y="571" style="font-size:32px;font-weight:bold;fill:#2b9be0">e</text>
<path d="M113,570c8-3,18-13,23-20" stroke="#e7b83a" stroke-width="2" fill="none"/>
<circle cx="172" cy="561" r="12" fill="#74b944"/><circle cx="172" cy="562" r="7.500" fill="#fff"/><circle cx="172" cy="562" r="4" fill="#74b944"/><path d="M176,553l6-5M178,556l6-2M180,559l4,0" stroke="#e8872b" stroke-width="1.800"/>
<circle cx="218" cy="561" r="11.500" fill="#e0372b"/><path d="M218,561L208,567A11.500,11.500,0,0,0,218,572.500Z" fill="#27a84a"/><path d="M218,561V572.500A11.500,11.500,0,0,0,229.500,561Z" fill="#fbc02d"/><path d="M218,561L208,567A11.500,11.500,0,0,1,208,555Z" fill="#27a84a"/><circle cx="218" cy="561" r="5.500" fill="#fff"/><circle cx="218" cy="561" r="4.300" fill="#3f7fe8"/>
<rect x="253" y="549" width="24" height="25" rx="5" fill="#f2f5f5"/><circle cx="264.500" cy="561" r="7.500" fill="#3f9fdb"/><path d="M264.500,553.500a7.500,7.500,0,0,0,-7.500,7.500h7.500Z" fill="#e8423a"/><path d="M264.500,561h-7.500a7.500,7.500,0,0,0,7.500,7.500Z" fill="#f2b52c"/><path d="M264.500,561v7.500a7.500,7.500,0,0,0,6-3Z" fill="#2fae6d"/><circle cx="266" cy="561" r="3" fill="#f2f5f5"/>
<path d="M301,552c9-1,17,3,16,9c-1,5-5,3-7,4c-1,2,0,6-5,6c-6,0-9-5-9-10c0-5,2-8,5-9Z" fill="#eef0f2"/><circle cx="300" cy="558" r="2" fill="#e8423a"/><circle cx="307" cy="556" r="2" fill="#3f9fdb"/><circle cx="297" cy="564" r="2" fill="#2fae6d"/><path d="M306,572l13-21" stroke="#c88d50" stroke-width="2.500"/><circle cx="319" cy="551" r="2" fill="#e8a23a"/>
<text x="922" y="562.500" style="font-size:9px;fill:#ddd">EN</text>
<path d="M946,561h6l-3-3Z" fill="#ddd"/>
<text x="966" y="557" style="font-size:9px;fill:#e8e8e8">9:00 AM</text>
<text x="964" y="571" style="font-size:9px;fill:#e8e8e8">8/18/2021</text>
<rect x="1014" y="547" width="10" height="29" fill="#3a3a38"/>
<rect x="1014" y="547" width="10" height="14" fill="#5a5a58"/>
</svg>
</body></html>
